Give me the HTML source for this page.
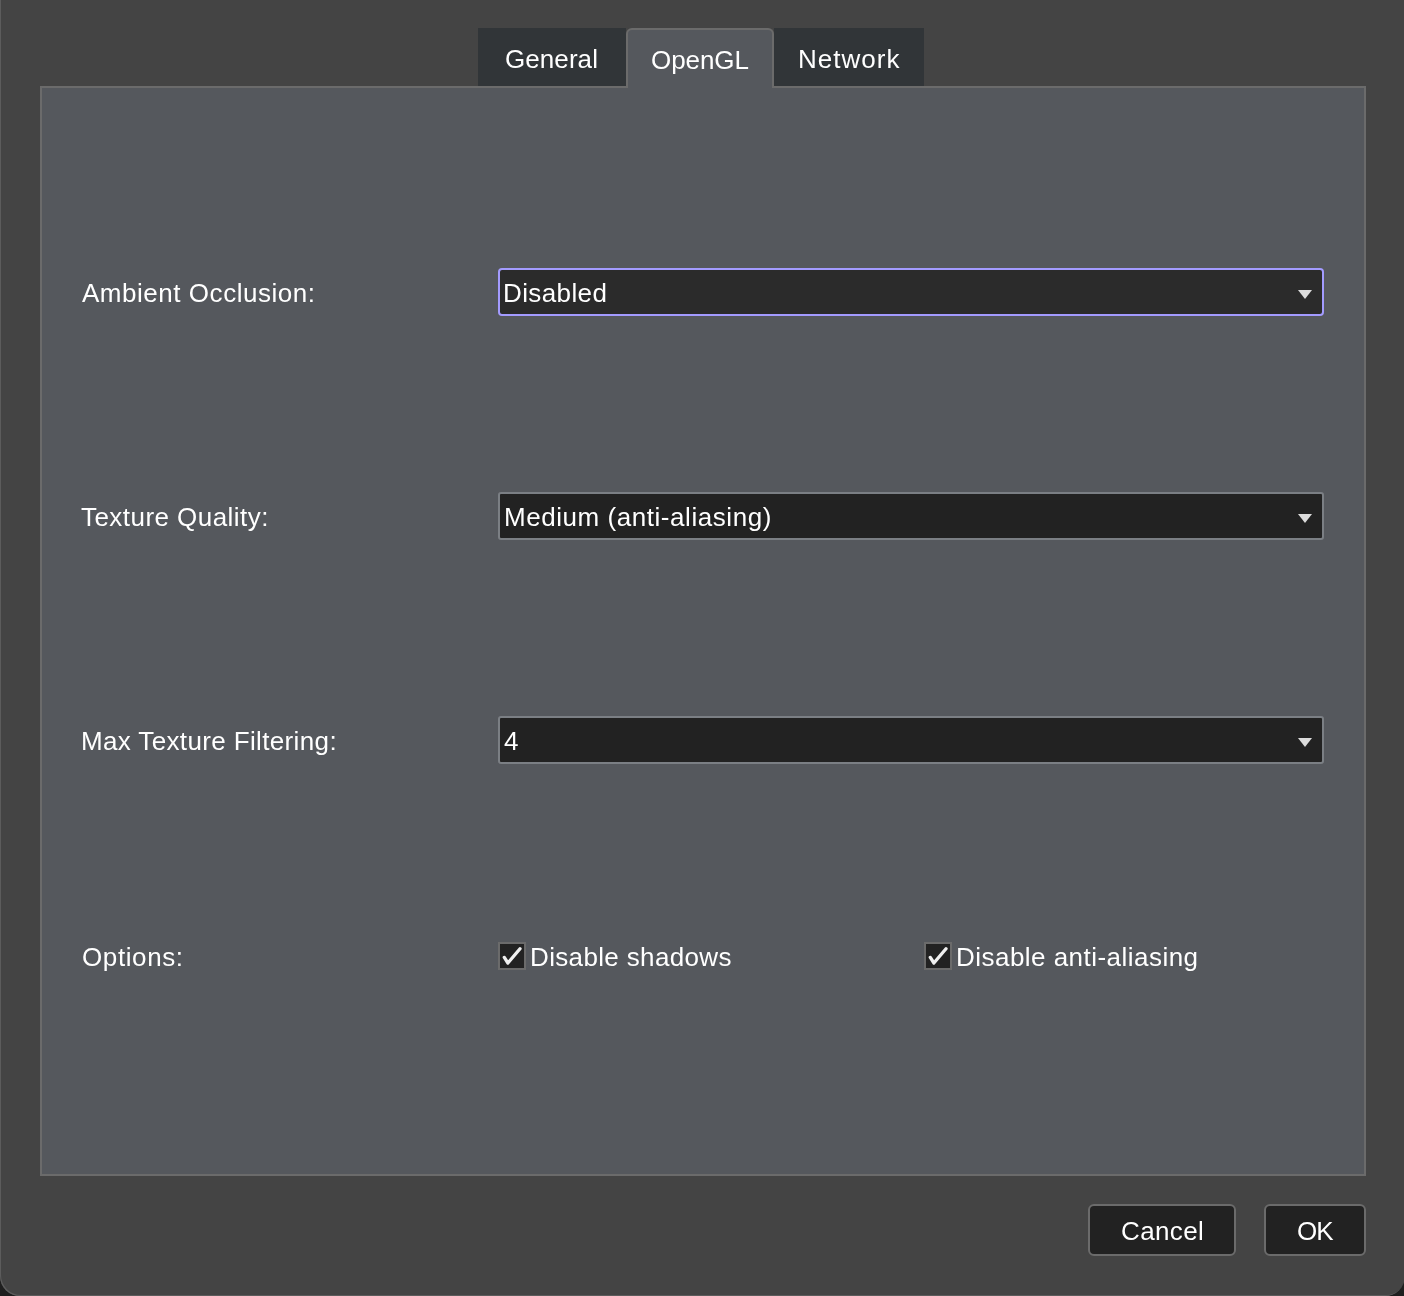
<!DOCTYPE html>
<html><head><meta charset="utf-8">
<style>
html,body{margin:0;padding:0;width:1404px;height:1296px;overflow:hidden;background:#1f1f1f;}
body{position:relative;font-family:"Liberation Sans",sans-serif;font-size:26px;color:#ffffff;}
.win{position:absolute;left:0;top:-40px;width:1405px;height:1336px;background:#444444;border-radius:0 0 20px 20px;box-shadow:inset 1px -1px 0 #5c5c5c;}
.pane{position:absolute;left:40px;top:86px;width:1322px;height:1086px;background:#55585d;border:2px solid #6b6b6b;}
.tab{position:absolute;top:28px;height:58px;background:#313538;}
.tab.sel{background:#55585d;border:2px solid #6b6b6b;border-bottom:none;border-radius:6px 6px 0 0;height:58px;top:28px;}
.t{position:absolute;white-space:nowrap;line-height:1;will-change:transform;}
.combo{position:absolute;left:498px;width:822px;height:44px;background:#222222;border:2px solid #7b7f84;border-radius:3px;}
.combo.focus{background:#2b2b2b;border-color:#a39bff;border-radius:4px;}
.arrow{position:absolute;width:0;height:0;border-left:7.5px solid transparent;border-right:7.5px solid transparent;border-top:9px solid #dcdcdc;filter:blur(0.3px);}
.cb{position:absolute;top:942px;width:24px;height:24px;background:#222222;border:2px solid #6b6b6b;}
.btn{position:absolute;top:1204px;height:48px;background:#222222;border:2px solid #6b6b6b;border-radius:6px;}
</style></head><body>
<div class="win"></div>

<div class="pane"></div>

<div class="tab" style="left:478px;width:148px;"></div>
<div class="tab" style="left:774px;width:150px;"></div>
<div class="tab sel" style="left:626px;width:144px;"></div>

<div class="t" style="left:505.4px;top:46.2px;letter-spacing:0.07px;">General</div>
<div class="t" style="left:651.0px;top:47.0px;letter-spacing:-0.06px;">OpenGL</div>
<div class="t" style="left:797.8px;top:45.8px;letter-spacing:1.03px;">Network</div>

<div class="t" style="left:82.0px;top:280.0px;letter-spacing:0.53px;">Ambient Occlusion:</div>
<div class="t" style="left:81.2px;top:504.0px;letter-spacing:0.45px;">Texture Quality:</div>
<div class="t" style="left:81.4px;top:728.0px;letter-spacing:0.36px;">Max Texture Filtering:</div>
<div class="t" style="left:81.9px;top:944.4px;letter-spacing:0.6px;">Options:</div>

<div class="combo focus" style="top:268px;"></div>
<div class="combo" style="top:492px;"></div>
<div class="combo" style="top:716px;"></div>

<div class="arrow" style="left:1297.5px;top:290px;"></div>
<div class="arrow" style="left:1297.5px;top:514px;"></div>
<div class="arrow" style="left:1297.5px;top:738px;"></div>

<div class="t" style="left:503.4px;top:280.0px;letter-spacing:0.39px;">Disabled</div>
<div class="t" style="left:503.5px;top:504.0px;letter-spacing:0.55px;">Medium (anti-aliasing)</div>
<div class="t" style="left:504.3px;top:728.0px;letter-spacing:0px;">4</div>

<div class="cb" style="left:498px;"><svg width="28" height="28" style="position:absolute;left:-2px;top:-2px;filter:blur(0.5px);"><path d="M6.3 15.4 L9.9 21 L22.0 6.8" fill="none" stroke="#f0f0f0" stroke-width="3.3" stroke-linecap="round" stroke-linejoin="round"/></svg></div>
<div class="cb" style="left:924px;"><svg width="28" height="28" style="position:absolute;left:-2px;top:-2px;filter:blur(0.5px);"><path d="M6.3 15.4 L9.9 21 L22.0 6.8" fill="none" stroke="#f0f0f0" stroke-width="3.3" stroke-linecap="round" stroke-linejoin="round"/></svg></div>
<div class="t" style="left:529.5px;top:944.0px;letter-spacing:0.35px;">Disable shadows</div>
<div class="t" style="left:955.6px;top:944.0px;letter-spacing:0.47px;">Disable anti-aliasing</div>

<div class="btn" style="left:1088px;width:144px;"></div>
<div class="btn" style="left:1264px;width:98px;"></div>
<div class="t" style="left:1120.6px;top:1218.0px;letter-spacing:0.38px;">Cancel</div>
<div class="t" style="left:1297.2px;top:1218.0px;letter-spacing:-1.0px;">OK</div>
</body></html>
